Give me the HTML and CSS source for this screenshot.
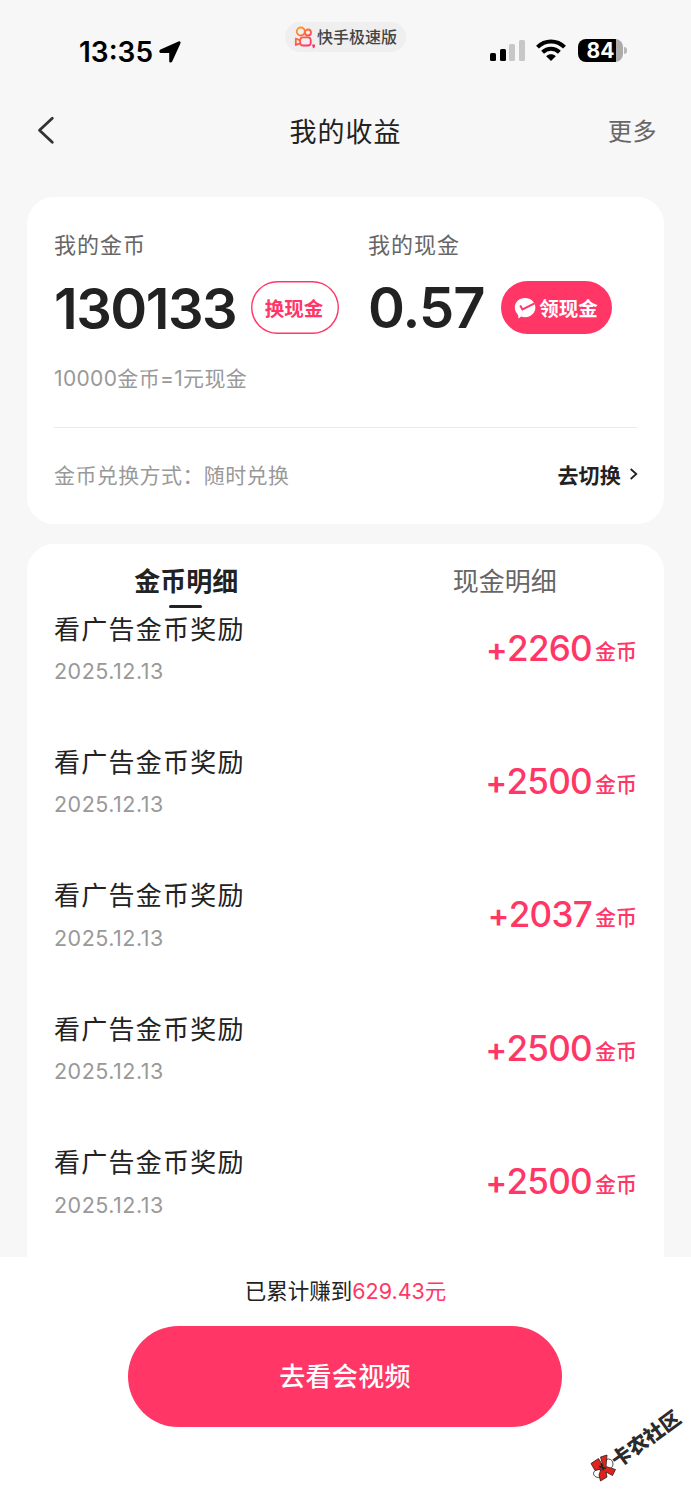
FILE: index.html
```html
<!DOCTYPE html>
<html lang="zh-CN">
<head>
<meta charset="utf-8">
<title>我的收益</title>
<link rel="stylesheet" href="styles.css">
</head>
<body>
<div class="screen">
  <header class="status">
    <div class="clock"><span class="time">13:35</span>
      <svg class="loc" width="24" height="24" viewBox="0 0 24 24"><path d="M2.500 9.500 20.500 1.500c1.500-.6 2.600.5 1.900 2L14.200 21.400c-.8 1.700-3 1.400-3-.5V13H3.200c-2.200 0-2.500-2.600-.7-3.500z"/></svg>
    </div>
    <div class="app-pill">
      <svg width="21" height="23" viewBox="0 0 21 23" fill="none" stroke-width="1.800">
        <defs><linearGradient id="brand" gradientUnits="userSpaceOnUse" x1="3" y1="2" x2="17" y2="20"><stop offset="0" stop-color="#ff9d20"/><stop offset=".5" stop-color="#ff5a48"/><stop offset="1" stop-color="#ff3078"/></linearGradient></defs>
        <g stroke="url(#brand)"><circle cx="6.800" cy="5.500" r="4"/><circle cx="14" cy="6.500" r="3"/><rect x="6.200" y="11.300" width="10.500" height="8.200" rx="2.800"/><path d="M6 14.300 1.800 12.500V19L6 17.300" stroke-linejoin="round"/></g>
        <path d="M18 18.500h3v2.500l-2 1.500z" fill="#f33a69"/>
      </svg>
      <span>快手极速版</span>
    </div>
    <div class="indicators">
      <svg class="signal" width="36" height="23" viewBox="0 0 36 23"><rect x="0" y="14" width="6" height="8" rx="1.500"/><rect x="10" y="10" width="6" height="12" rx="1.500"/><g fill="#c7c7c7"><rect x="19" y="5" width="6" height="17" rx="1.500"/><rect x="29" y="1" width="6" height="21" rx="1.500"/></g></svg>
      <svg class="wifi" width="30" height="23" viewBox="0 0 30 23"><g fill="none" stroke="#000" stroke-width="4"><path d="M1.500 8.200C9 .5 21 .5 28.500 8.200"/><path d="M6.600 13.300c4.900-4.800 11.900-4.800 16.800 0"/></g><path d="M10.200 17.200c2.900-2.600 6.700-2.600 9.600 0L15 22z"/></svg>
      <div class="battery"><span>84</span></div>
    </div>
  </header>

  <nav class="nav">
    <svg width="24" height="30" viewBox="0 0 24 30" fill="none" stroke="#333" stroke-width="2.800" stroke-linecap="round" stroke-linejoin="round"><path d="M18.300 3.300 5.500 15.300l12.800 12"/></svg>
    <h1>我的收益</h1>
    <a class="more">更多</a>
  </nav>

  <section class="card wallet">
    <div class="balances">
      <div class="balance coins">
        <div class="label">我的金币</div>
        <div class="value"><strong>130133</strong><button class="pill outline">换现金</button></div>
      </div>
      <div class="balance cash">
        <div class="label">我的现金</div>
        <div class="value"><strong>0.57</strong><button class="pill solid"><svg width="22" height="22" viewBox="0 0 22 22"><path fill="#fff" d="M11 1c5.800 0 10.400 4.200 10.400 9.500S16.800 20.200 11 20.200c-1.300 0-2.600-.2-3.800-.6L4.500 21.400l-.4-3.500C2.200 15.800.8 13.300.8 10.500.8 5.200 5.200 1 11 1z"/><path d="m6.200 8.600 2.300 3.900L20.500 6.300" fill="none" stroke="#ff3666" stroke-width="2"/></svg>领现金</button></div>
      </div>
    </div>
    <p class="rate">10000金币=1元现金</p>
    <div class="exchange">
      <span class="mode">金币兑换方式：随时兑换</span>
      <span class="switch">去切换<svg width="9" height="14" viewBox="0 0 9 14" fill="none" stroke="#222" stroke-width="1.800"><path d="m1.700 2 5.600 5-5.600 5"/></svg></span>
    </div>
  </section>

  <section class="card detail">
    <div class="tabs"><span class="tab active">金币明细</span><span class="tab">现金明细</span></div>
    <div class="viewport"><ul class="list">
      <li><div><div class="title">看广告金币奖励</div><div class="date">2025.12.13</div></div><div class="amount"><b>+</b>2260<small>金币</small></div></li>
      <li><div><div class="title">看广告金币奖励</div><div class="date">2025.12.13</div></div><div class="amount"><b>+</b>2500<small>金币</small></div></li>
      <li><div><div class="title">看广告金币奖励</div><div class="date">2025.12.13</div></div><div class="amount"><b>+</b>2037<small>金币</small></div></li>
      <li><div><div class="title">看广告金币奖励</div><div class="date">2025.12.13</div></div><div class="amount"><b>+</b>2500<small>金币</small></div></li>
      <li><div><div class="title">看广告金币奖励</div><div class="date">2025.12.13</div></div><div class="amount"><b>+</b>2500<small>金币</small></div></li>
    </ul></div>
  </section>

  <footer class="footer">
    <p class="total">已累计赚到<span>629.43元</span></p>
    <button class="cta">去看会视频</button>
  </footer>

  <div class="watermark">
    <svg width="28" height="28" viewBox="0 0 28 28" stroke="#222" stroke-width=".8"><ellipse cx="8.500" cy="19.500" rx="5" ry="4" fill="#fff"/><ellipse cx="18.500" cy="10" rx="4.500" ry="5" fill="#fff"/><path fill="#e2231a" d="M1 9.500 8.500 4.500 13 12 10.500 3l6.500-2-1 11.500 9.500 3-3 6-6.500-3.500 1 5-6.500 4-1.500-6 2-6L5 16.500z"/><path d="m9 12.500 7 2m-5-5 2.500 7" stroke-width="1.500"/></svg>
    <span>卡农社区</span>
  </div>
</div>
</body>
</html>
```
FILE: styles.css
```css
* { box-sizing: border-box; margin: 0; padding: 0; }
body { background: #f7f7f7; font-family: Inter, "Noto Sans CJK SC", sans-serif; color: #222; }
button { border: 0; font: inherit; }
.screen { position: relative; width: 691px; height: 1500px; overflow: hidden; display: flex; flex-direction: column; }

.status { height: 100px; flex: none; display: grid; grid-template-columns: 285px 121px 1fr; }
.clock { display: flex; align-items: center; height: 32px; margin: 36px 0 0 79px; }
.time { width: 79px; font-size: 28px; font-weight: 600; line-height: 32px; color: #000; white-space: nowrap; }
.app-pill { display: flex; align-items: center; height: 30px; margin-top: 22px; padding-left: 9px; border-radius: 15px; background: #efefef; }
.app-pill span { margin-left: 2px; font-size: 16px; font-weight: 500; color: #444; white-space: nowrap; line-height: 28px; }
.indicators { display: flex; align-items: flex-start; padding: 39px 0 0 84px; }
.wifi { margin-left: 10px; }
.battery { position: relative; width: 45px; height: 23px; margin-left: 12px; border-radius: 8px; background: linear-gradient(90deg, #000 38px, #ababab 38px); color: #fff; font-size: 21px; font-weight: 700; line-height: 23px; text-align: center; }
.battery::after { content: ""; position: absolute; right: -4px; top: 8px; width: 3px; height: 7px; border-radius: 0 3px 3px 0; background: #b8b8b8; }

.nav { height: 60px; flex: none; display: grid; grid-template-columns: 100px 1fr 100px; align-items: center; padding: 0 34px; }
.nav h1 { padding-top: 5px; text-align: center; font-size: 27px; font-weight: 400; letter-spacing: 1px; line-height: 40px; }
.more { padding-bottom: 2px; text-align: right; font-size: 24px; letter-spacing: .5px; color: #666; }

.card { margin: 0 27px; background: #fff; border-radius: 27px; }
.wallet { flex: none; height: 327px; margin-top: 37px; padding: 32px 27px 0; }
.balances { display: grid; grid-template-columns: 314px 1fr; }
.label { font-size: 22px; letter-spacing: 1px; line-height: 32px; color: #666; }
.value { display: flex; align-items: center; height: 53px; margin-top: 20px; }
.value strong { padding-top: 4px; font-size: 56px; font-weight: 600; line-height: 53px; letter-spacing: -1.500px; white-space: nowrap; }
.coins strong { width: 197px; }
.cash strong { width: 133px; letter-spacing: -.9px; padding-top: 2px; }
.pill { display: flex; align-items: center; justify-content: center; height: 53px; border-radius: 27px; font-size: 19.500px; font-weight: 700; white-space: nowrap; }
.outline { width: 88px; padding-right: 2px; box-shadow: inset 0 0 0 1.400px #ff3666; background: #fff; color: #ff3666; }
.solid { width: 111px; padding-right: 1px; background: #ff3666; color: #fff; gap: 3px; }
.rate { margin-top: 29px; font-size: 21px; line-height: 32px; letter-spacing: .35px; color: #999; }
.exchange { display: flex; justify-content: space-between; align-items: center; height: 96px; margin-top: 32px; padding-bottom: 3px; border-top: 1px solid #ebebeb; }
.mode { font-size: 21px; letter-spacing: .4px; color: #999; }
.switch { display: flex; align-items: center; gap: 8px; margin-right: -1px; font-size: 21px; letter-spacing: .2px; font-weight: 700; }

.detail { flex: none; height: 713px; margin-top: 20px; border-radius: 27px 27px 0 0; }
.tabs { height: 73px; display: grid; grid-template-columns: 1fr 1fr; text-align: center; }
.tab { position: relative; height: 66px; font-size: 26px; line-height: 76px; color: #666; }
.active { color: #222; font-weight: 700; }
.active::after { content: ""; position: absolute; left: 50%; bottom: 2px; width: 33px; height: 3px; margin-left: -17px; border-radius: 2px; background: #222; }
.viewport { height: 640px; overflow: hidden; padding: 0 27px; }
.list { list-style: none; margin-top: -7.500px; }
.list li { display: flex; justify-content: space-between; height: 133.400px; }
.title { font-size: 26px; letter-spacing: 1.250px; line-height: 40px; }
.date { margin-top: 5.500px; font-size: 21.500px; line-height: 32px; letter-spacing: .5px; color: #999; }
.amount { margin-top: 15px; font-size: 35px; font-weight: 500; line-height: 46px; letter-spacing: -.7px; color: #ff3666; white-space: nowrap; }
.amount b { display: inline-block; width: 21px; font-size: 32px; font-weight: 600; letter-spacing: 0; }
.amount small { position: relative; top: -2px; margin-left: 3px; font-size: 21px; font-weight: 500; letter-spacing: 0; }

.footer { flex: none; height: 243px; background: #fff; display: flex; flex-direction: column; align-items: center; }
.total { height: 32px; margin-top: 18px; font-size: 21.500px; line-height: 32px; }
.total span { color: #ff3666; }
.cta { width: 434px; height: 101px; margin: 19px 1px 0 0; padding-bottom: 4px; border-radius: 51px; background: #ff3666; color: #fff; font-size: 26px; font-weight: 500; letter-spacing: .3px; }

.watermark { position: absolute; left: 590px; top: 1454px; display: flex; align-items: center; }
.watermark span { position: absolute; left: 16px; top: -27px; color: #2b2b2b; font-size: 20px; font-weight: 900; line-height: 24px; white-space: nowrap; transform: rotate(-36deg); }
```
